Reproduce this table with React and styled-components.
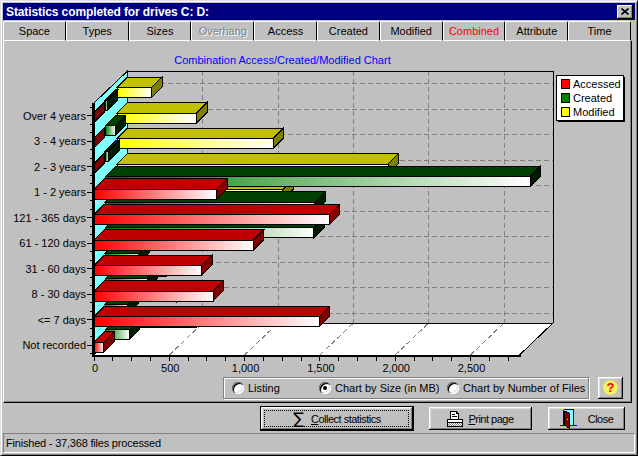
import React from 'react';
import styled, { createGlobalStyle } from 'styled-components';

const GlobalStyle = createGlobalStyle`
  html, body {
    margin: 0;
    padding: 0;
    background: #c0c0c0;
  }
  body {
    font-family: "Liberation Sans", Arial, sans-serif;
    font-size: 11px;
    color: #000;
  }
  * {
    box-sizing: border-box;
  }
`;

// chart geometry, in page pixels
const SCALE = 75.3 / 500;
const X0 = 94;
const FLOOR_Y = 355;
const PLOT_RIGHT = 519.5;
const DEPTH_X = 33.5;
const DEPTH_Y = 32;
const ROW = 25.5;
const BAR_TOP0 = 342;
const BAR_H = 10;
const BAR_DX = 10.5;
const BAR_DY = 10.5;
const SLOT_X = 11.5;
const SLOT_Y = 12.5;
const WALL_TOP = 103;

const categories = [
  'Not recorded',
  '<= 7 days',
  '8 - 30 days',
  '31 - 60 days',
  '61 - 120 days',
  '121 - 365 days',
  '1 - 2 years',
  '2 - 3 years',
  '3 - 4 years',
  'Over 4 years'
];

const series = [
  {
    key: 'acc',
    name: 'Accessed',
    face: '#ff0000',
    top: '#c00000',
    side: '#800000',
    values: [66, 1496, 792, 715, 1058, 1562, 815, 0, 0, 0]
  },
  {
    key: 'cre',
    name: 'Created',
    face: '#008000',
    top: '#004000',
    side: '#001c00',
    values: [158, 149, 276, 222, 1384, 1391, 2819, 20, 66, 13]
  },
  {
    key: 'mod',
    name: 'Modified',
    face: '#ffff00',
    top: '#c0c000',
    side: '#808000',
    values: [531, 398, 332, 598, 797, 1102, 1800, 1036, 529, 230]
  }
];

const tabs = ['Space', 'Types', 'Sizes', 'Overhang', 'Access', 'Created', 'Modified', 'Combined', 'Attribute', 'Time'];

const Bar = ({ slot, row, value, s }) => {
  const len = value * SCALE;
  const x0 = X0 + slot * SLOT_X;
  const yT = BAR_TOP0 - row * ROW - slot * SLOT_Y;
  const yB = yT + BAR_H;
  const x1 = x0 + len;
  return (
    <g stroke="#000" strokeWidth="1">
      {len > 0 && <rect x={x0} y={yT} width={len} height={BAR_H} fill={`url(#face-${s.key})`} />}
      <polygon
        points={`${x0},${yT} ${x1},${yT} ${x1 + BAR_DX},${yT - BAR_DY} ${x0 + BAR_DX},${yT - BAR_DY}`}
        fill={s.top}
      />
      <polygon
        points={`${x1},${yT} ${x1 + BAR_DX},${yT - BAR_DY} ${x1 + BAR_DX},${yB - BAR_DY} ${x1},${yB}`}
        fill={s.side}
      />
    </g>
  );
};

const Chart = () => {
  const backX = X0 + DEPTH_X;
  const backRight = PLOT_RIGHT + DEPTH_X;
  const backFloor = FLOOR_Y - DEPTH_Y;
  const backTop = WALL_TOP - DEPTH_Y;
  const majors = [1, 2, 3, 4, 5];
  const minorTicks = Array.from({ length: 23 }, (_, k) => X0 + k * 125 * SCALE);

  return (
    <ChartSvg width={627} height={334} viewBox="4 41 627 334" shapeRendering="crispEdges">
      <defs>
        {series.map(s => (
          <linearGradient key={s.key} id={`face-${s.key}`} x1="0" x2="1" y1="0" y2="0">
            <stop offset="0" stopColor={s.face} />
            <stop offset="1" stopColor="#ffffff" />
          </linearGradient>
        ))}
      </defs>

      <ChartTitle x={282.5} y={64} textAnchor="middle">
        Combination Access/Created/Modified Chart
      </ChartTitle>

      {/* back wall */}
      <rect x={backX} y={backTop} width={backRight - backX} height={backFloor - backTop} fill="#c0c0c0" />
      {categories.map((_, i) => (
        <GridLine key={i} x1={backX} x2={backRight} y1={313 - ROW * i} y2={313 - ROW * i} />
      ))}
      {majors.map(k => (
        <GridLine key={k} x1={backX + k * 500 * SCALE} x2={backX + k * 500 * SCALE} y1={backTop} y2={backFloor} />
      ))}
      <path d={`M${backX} ${backTop} H${backRight} V${backFloor}`} fill="none" stroke="#000" />

      {/* left wall */}
      <polygon
        points={`${X0},${WALL_TOP} ${backX},${backTop} ${backX},${backFloor} ${X0},${FLOOR_Y}`}
        fill="#80ffff"
        stroke="#000"
      />

      {/* floor */}
      <polygon
        points={`${X0},${FLOOR_Y} ${PLOT_RIGHT},${FLOOR_Y} ${backRight},${backFloor} ${backX},${backFloor}`}
        fill="#fff"
        stroke="#000"
      />
      {majors.map(k => (
        <GridLine
          key={k}
          x1={X0 + k * 500 * SCALE}
          y1={FLOOR_Y}
          x2={backX + k * 500 * SCALE}
          y2={backFloor}
        />
      ))}

      {/* bars, back series first */}
      {[2, 1, 0].map(slot =>
        series[slot].values.map((v, row) => (
          <Bar key={`${slot}-${row}`} slot={slot} row={row} value={v} s={series[slot]} />
        ))
      )}

      {/* axes */}
      <line x1={93} x2={93} y1={WALL_TOP} y2={357} stroke="#000" strokeWidth="2" />
      <line x1={92} x2={PLOT_RIGHT + 1} y1={356} y2={356} stroke="#000" strokeWidth="2" />
      {categories.map((c, i) => {
        const cy = 345 - ROW * i;
        return (
          <g key={c}>
            <line x1={87} x2={92} y1={cy} y2={cy} stroke="#000" />
            <line x1={90} x2={92} y1={cy - 8.5} y2={cy - 8.5} stroke="#000" />
            <line x1={90} x2={92} y1={cy + 8.5} y2={cy + 8.5} stroke="#000" />
            <text x={86} y={cy + 4} textAnchor="end">{c}</text>
          </g>
        );
      })}
      {minorTicks.map(x => (
        <line key={x} x1={x} x2={x} y1={357} y2={361} stroke="#000" />
      ))}
      {[0, 1, 2, 3, 4, 5].map(k => (
        <text key={k} x={X0 + k * 500 * SCALE + 1} y={372} textAnchor="middle">
          {(k * 500).toLocaleString('en-US')}
        </text>
      ))}

      {/* legend */}
      <rect x={557.5} y={76.5} width={67} height={45} fill="#000" />
      <rect x={556.5} y={75.5} width={67} height={45} fill="#fff" stroke="#000" />
      {series.map((s, i) => (
        <g key={s.key}>
          <rect x={561.5} y={79.5 + i * 14} width={8} height={9} fill={s.face} stroke="#000" />
          <text x={573} y={88 + i * 14}>{s.name}</text>
        </g>
      ))}
    </ChartSvg>
  );
};

const SigmaIcon = () => <Sigma>∑</Sigma>;

const PrinterIcon = () => (
  <svg width="16" height="16" viewBox="0 0 16 16" shapeRendering="crispEdges">
    <defs>
      <pattern id="printer-dither" width="2" height="2" patternUnits="userSpaceOnUse">
        <rect width="2" height="2" fill="#fff" />
        <rect width="1" height="1" fill="#808080" />
        <rect x="1" y="1" width="1" height="1" fill="#808080" />
      </pattern>
    </defs>
    <path d="M3.5 0.5 H9.5 L11.5 2.5 V8.5 H3.5 Z" fill="#fff" stroke="#000" />
    <path d="M9.5 0.5 V2.5 H11.5" fill="none" stroke="#000" />
    <path d="M5 3.5 H8 M5 5.5 H10" stroke="#000" />
    <rect x="0.5" y="8.5" width="15" height="7" fill="#fff" stroke="#000" />
    <rect x="1" y="12" width="14" height="3" fill="url(#printer-dither)" />
    <path d="M0.5 11.5 H15.5" stroke="#000" />
  </svg>
);

const DoorIcon = () => (
  <svg width="17" height="20" viewBox="0 0 17 20" shapeRendering="crispEdges">
    <rect x="5" y="1" width="8" height="15" fill="#80ffff" />
    <path d="M3.5 0.5 H13.5 V16.5" fill="none" stroke="#0000c0" />
    <path d="M3.5 0.5 V16.5" stroke="#000080" />
    <path d="M0 16.5 H17" stroke="#0000ff" />
    <polygon points="4,2 9,4 9,19 4,16" fill="#800000" stroke="#000" />
    <rect x="7" y="10" width="1" height="1" fill="#ffff00" />
  </svg>
);

const App = () => (
  <>
    <GlobalStyle />
    <Window>
      <TitleBar>
        <span>Statistics completed for drives C: D:</span>
        <CloseBox>
          <svg width="8" height="7" viewBox="0 0 8 7">
            <path d="M0.5 0.5 L7.5 6.5 M7.5 0.5 L0.5 6.5" stroke="#000" strokeWidth="1.6" />
          </svg>
        </CloseBox>
      </TitleBar>

      <TabStrip>
        {tabs.map(t => (
          <Tab key={t} $state={t === 'Combined' ? 'active' : t === 'Overhang' ? 'disabled' : 'normal'}>
            {t}
          </Tab>
        ))}
      </TabStrip>

      <TabPage>
        <Chart />
        <OptionsRow>
          <GroupBox>
            <RadioOption $w={87}>
              <RadioDot />
              Listing
            </RadioOption>
            <RadioOption $w={128}>
              <RadioDot $checked />
              Chart by Size (in MB)
            </RadioOption>
            <RadioOption $w={140}>
              <RadioDot />
              Chart by Number of Files
            </RadioOption>
          </GroupBox>
          <HelpButton>
            <HelpGlyph>?</HelpGlyph>
          </HelpButton>
        </OptionsRow>
      </TabPage>

      <ButtonRow>
        <PushButton $w={154} $default>
          <SigmaIcon />
          <ButtonLabel><u>C</u>ollect statistics</ButtonLabel>
        </PushButton>
        <PushButton $w={105}>
          <PrinterIcon />
          <ButtonLabel><u>P</u>rint page</ButtonLabel>
        </PushButton>
        <PushButton $w={79}>
          <DoorIcon />
          <ButtonLabel $pad={6}>Close</ButtonLabel>
        </PushButton>
      </ButtonRow>

      <StatusBar>Finished - 37,368 files processed</StatusBar>
    </Window>
  </>
);

export default App;

const Window = styled.div`
  width: 638px;
  height: 456px;
  display: flex;
  flex-direction: column;
  background: #c0c0c0;
  border: 1px solid;
  border-color: #dfdfdf #000 #000 #dfdfdf;
  box-shadow: inset 1px 1px #fff, inset -1px -1px #808080;
  padding: 2px;
`;

const TitleBar = styled.div`
  flex: none;
  height: 17px;
  background: #000080;
  color: #fff;
  display: flex;
  align-items: center;
  justify-content: space-between;
  padding: 0 2px 0 3px;
  font-size: 12px;
  font-weight: bold;
  letter-spacing: -0.1px;
`;

const CloseBox = styled.div`
  width: 16px;
  height: 14px;
  background: #c0c0c0;
  display: flex;
  align-items: center;
  justify-content: center;
  box-shadow: inset -1px -1px #000, inset 1px 1px #fff, inset -2px -2px #808080;
`;

const TabStrip = styled.div`
  flex: none;
  width: 628px;
  height: 20px;
  margin-top: 1px;
  display: grid;
  grid-template-columns: repeat(10, 1fr);
`;

const Tab = styled.div`
  display: flex;
  align-items: center;
  justify-content: center;
  border-top: 1px solid #fff;
  border-left: 1px solid #fff;
  border-right: 1px solid #000;
  border-bottom: 1px solid #fff;
  border-top-left-radius: 2px;
  border-top-right-radius: 2px;
  color: ${p => (p.$state === 'active' ? '#ff0000' : p.$state === 'disabled' ? '#808080' : '#000')};
  text-shadow: ${p => (p.$state === 'disabled' ? '1px 1px #fff' : 'none')};
`;

const TabPage = styled.div`
  flex: none;
  width: 629px;
  height: 362px;
  display: flex;
  flex-direction: column;
  border-left: 1px solid #fff;
  border-right: 1px solid #000;
  border-bottom: 1px solid #000;
  box-shadow: inset -1px -1px #808080;
`;

const ChartSvg = styled.svg`
  display: block;
  flex: none;
  text {
    font-family: "Liberation Sans", Arial, sans-serif;
    font-size: 11px;
    fill: #000;
  }
`;

const ChartTitle = styled.text`
  && {
    fill: #0000ff;
  }
`;

const GridLine = styled.line`
  stroke: #808080;
  stroke-dasharray: 5 3;
`;

const OptionsRow = styled.div`
  flex: 1;
  display: flex;
  align-items: center;
  justify-content: flex-end;
  gap: 9px;
  padding: 0 8px 2px 0;
`;

const GroupBox = styled.div`
  width: 366px;
  height: 22px;
  display: flex;
  align-items: center;
  padding-left: 8px;
  border: 1px solid #808080;
  box-shadow: inset 1px 1px #fff, 1px 1px #fff;
`;

const RadioOption = styled.label`
  flex: none;
  width: ${p => p.$w}px;
  display: flex;
  align-items: center;
  gap: 4px;
  white-space: nowrap;
`;

const RadioDot = styled.span`
  position: relative;
  flex: none;
  width: 12px;
  height: 12px;
  border-radius: 50%;
  background: #fff;
  box-shadow: inset 1px 1px #808080, inset 2px 2px #000, inset -1px -1px #fff, inset -2px -2px #dfdfdf;
  &::after {
    content: '';
    display: ${p => (p.$checked ? 'block' : 'none')};
    position: absolute;
    left: 4px;
    top: 4px;
    width: 4px;
    height: 4px;
    border-radius: 50%;
    background: #000;
  }
`;

const HelpButton = styled.div`
  width: 25px;
  height: 22px;
  display: flex;
  align-items: center;
  justify-content: center;
  box-shadow: inset -1px -1px #000, inset 1px 1px #fff, inset -2px -2px #808080, inset 2px 2px #dfdfdf;
`;

const HelpGlyph = styled.span`
  width: 15px;
  height: 15px;
  border-radius: 50%;
  background: #f4f060;
  color: #ff0000;
  font-weight: bold;
  font-size: 13px;
  line-height: 15px;
  text-align: center;
`;

const ButtonRow = styled.div`
  flex: none;
  height: 30px;
  display: flex;
  justify-content: flex-end;
  gap: 14px;
  padding: 3px 9px 0 0;
`;

const PushButton = styled.div`
  position: relative;
  width: ${p => p.$w}px;
  height: 25px;
  display: flex;
  align-items: center;
  justify-content: center;
  gap: 5px;
  background: #c0c0c0;
  border: 1px solid ${p => (p.$default ? '#000' : 'transparent')};
  box-shadow: ${p =>
    p.$default
      ? 'inset -1px -1px #000, inset 1px 1px #fff, inset -2px -2px #808080, inset 2px 2px #dfdfdf'
      : 'inset -1px -1px #000, inset 1px 1px #fff, inset -2px -2px #808080, inset 2px 2px #dfdfdf'};
  ${p =>
    p.$default
      ? `&::after {
    content: '';
    position: absolute;
    inset: 3px 4px 3px 3px;
    border: 1px dotted #000;
  }`
      : ''}
`;

const ButtonLabel = styled.span`
  font-size: 11px;
  letter-spacing: -0.5px;
  padding-left: ${p => p.$pad || 0}px;
`;

const Sigma = styled.span`
  font-family: "DejaVu Sans", sans-serif;
  font-size: 16px;
  line-height: 1;
  margin-right: 2px;
`;

const StatusBar = styled.div`
  flex: none;
  height: 20px;
  display: flex;
  align-items: center;
  padding-left: 2px;
  border: 1px solid;
  border-color: #808080 #fff #fff #808080;
  letter-spacing: -0.2px;
`;
